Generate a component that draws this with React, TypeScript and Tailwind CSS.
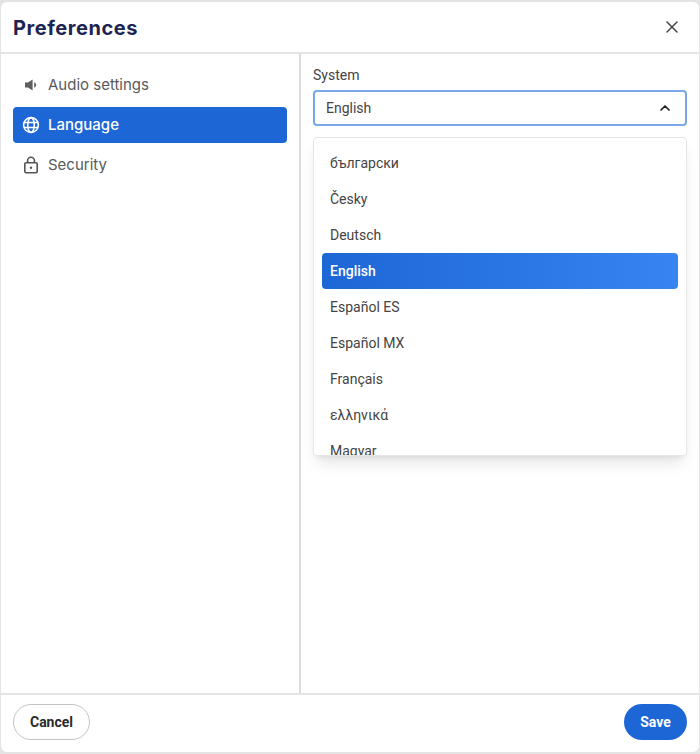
import React from 'react';
import { X, ChevronUp } from 'lucide-react';

const languages = ['български', 'Česky', 'Deutsch', 'English', 'Español ES', 'Español MX', 'Français', 'ελληνικά', 'Magyar'];

const SpeakerIcon = () => (
  <svg width="14" height="12" viewBox="0 0 14 12" fill="#5f5f5f">
    <path d="M1 3.4h3L8.6 .6v10.8L4 8.6H1z" />
    <path d="M10.2 3.2c1.3.6 2 1.6 2 2.8s-.7 2.2-2 2.8z" />
  </svg>
);

const GlobeIcon = () => (
  <svg width="18" height="18" viewBox="0 0 18 18" fill="none" stroke="white" strokeWidth="1.6">
    <circle cx="9" cy="9" r="7.4" />
    <ellipse cx="9" cy="9" rx="3.3" ry="7.4" />
    <path d="M2 6.5h14M2 11.5h14" />
  </svg>
);

const LockIcon = () => (
  <svg width="16" height="18" viewBox="0 0 16 18" fill="none" stroke="#555" strokeWidth="1.6">
    <rect x="1.8" y="6.8" width="12.4" height="10" rx="1.2" />
    <path d="M4.6 6.8V4.6a3.4 3.4 0 0 1 6.8 0v2.2" />
    <circle cx="8" cy="11.8" r="1.2" fill="#555" stroke="none" />
  </svg>
);

const navItems = [
  { label: 'Audio settings', icon: <SpeakerIcon />, active: false },
  { label: 'Language', icon: <GlobeIcon />, active: true },
  { label: 'Security', icon: <LockIcon />, active: false },
];

export default function App() {
  return (
    <div className="w-[700px] h-[754px] bg-[#e4e4e4] pt-[2px] pb-[2px] px-px font-['Roboto',sans-serif]">
      <div className="h-full bg-white rounded-md flex flex-col overflow-hidden">
        <header className="h-[52px] shrink-0 border-b-2 border-[#e4e4e4] flex items-center justify-between pl-3 pr-[17px]">
          <h1 className="pt-px font-['Inter',sans-serif] font-bold text-[20px] tracking-[0.55px] text-[#1d2352]">Preferences</h1>
          <X size={20} strokeWidth={1.8} color="#444" />
        </header>

        <div className="flex-1 flex min-h-0">
          <nav className="w-[300px] shrink-0 border-r-2 border-[#dcdcdc] pt-[13px] pl-3 pr-3 flex flex-col gap-1">
            {navItems.map((item) => (
              <div
                key={item.label}
                className={`h-9 rounded flex items-center gap-2 pl-[9px] font-['Inter',sans-serif] text-[15px] ${
                  item.active ? 'bg-[#1d66d6] text-white font-medium' : 'text-[#5a5a5a]'
                }`}
              >
                <span className="w-[18px] flex justify-center">{item.icon}</span>
                {item.label}
              </div>
            ))}
          </nav>

          <main className="relative flex-1 pt-3 px-3">
            <label className="block text-sm leading-[18px] text-[#444]">System</label>
            <div className="mt-[6px] h-9 rounded border-2 border-[#7aa7ea] flex items-center justify-between pl-[11px] pr-3 text-sm text-[#444]">
              English
              <ChevronUp size={16} strokeWidth={2.6} color="#222" />
            </div>

            <div className="absolute left-3 right-3 top-[83px] h-[319px] bg-white rounded border border-[#e6e6e6] shadow-lg overflow-hidden pt-[7px] px-2">
              {languages.map((lang) => (
                <div
                  key={lang}
                  className={`h-9 rounded flex items-center px-2 text-sm ${
                    lang === 'English'
                      ? 'bg-gradient-to-r from-[#1d66d6] to-[#3784f2] text-white font-medium'
                      : 'text-[#444]'
                  }`}
                >
                  {lang}
                </div>
              ))}
            </div>
          </main>
        </div>

        <footer className="h-[59px] shrink-0 border-t-2 border-[#e4e4e4] flex items-center justify-between px-3 pb-[3px]">
          <button className="h-9 w-[77px] rounded-full border border-[#c4c4c4] bg-white text-sm font-bold text-[#2b2b2b]">Cancel</button>
          <button className="h-9 w-[63px] rounded-full bg-[#1d66d6] text-sm font-bold text-white">Save</button>
        </footer>
      </div>
    </div>
  );
}
